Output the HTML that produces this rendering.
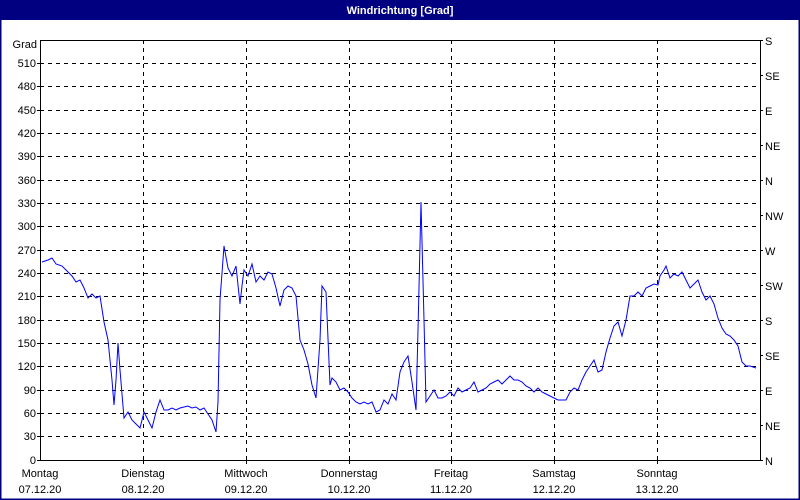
<!DOCTYPE html>
<html><head><meta charset="utf-8"><style>
html,body{margin:0;padding:0;background:#fff;}
svg{display:block;}
</style></head><body>
<svg width="800" height="500" xmlns="http://www.w3.org/2000/svg" font-family="Liberation Sans, sans-serif" font-size="11">
<rect x="0" y="0" width="800" height="500" fill="#fff"/>
<rect x="0.5" y="0.5" width="799" height="499" fill="none" stroke="#000080" stroke-width="2"/>
<rect x="0" y="0" width="800" height="20" fill="#000080"/>
<text x="400" y="14" fill="#fff" font-weight="bold" text-anchor="middle">Windrichtung [Grad]</text>
<g stroke="#000" stroke-width="1" stroke-dasharray="4,4" fill="none">
<path d="M40 63.5H760M40 86.5H760M40 110.5H760M40 133.5H760M40 156.5H760M40 180.5H760M40 203.5H760M40 226.5H760M40 250.5H760M40 273.5H760M40 296.5H760M40 320.5H760M40 343.5H760M40 366.5H760M40 390.5H760M40 413.5H760M40 436.5H760"/>
<path d="M143.5 40V460M246.5 40V460M349.5 40V460M451.5 40V460M554.5 40V460M657.5 40V460"/>
</g>
<g stroke="#000" stroke-width="1" fill="none">
<path d="M40.5 40V460.5H760.5V40M40 40.5H760"/>
<path d="M37 460.5H40M37 436.5H40M37 413.5H40M37 390.5H40M37 366.5H40M37 343.5H40M37 320.5H40M37 296.5H40M37 273.5H40M37 250.5H40M37 226.5H40M37 203.5H40M37 180.5H40M37 156.5H40M37 133.5H40M37 110.5H40M37 86.5H40M37 63.5H40"/>
<path d="M760 40.5h3M760 75.5h3M760 110.5h3M760 145.5h3M760 180.5h3M760 215.5h3M760 250.5h3M760 285.5h3M760 320.5h3M760 355.5h3M760 390.5h3M760 425.5h3M760 460.5h3"/>
<path d="M143.5 460v4M246.5 460v4M349.5 460v4M451.5 460v4M554.5 460v4M657.5 460v4"/>
</g>
<g text-anchor="end" fill="#000">
<text x="37" y="48">Grad</text>
<text x="36" y="67">510</text><text x="36" y="90">480</text><text x="36" y="114">450</text><text x="36" y="137">420</text><text x="36" y="160">390</text><text x="36" y="184">360</text><text x="36" y="207">330</text><text x="36" y="230">300</text><text x="36" y="254">270</text><text x="36" y="277">240</text><text x="36" y="300">210</text><text x="36" y="324">180</text><text x="36" y="347">150</text><text x="36" y="370">120</text><text x="36" y="394">90</text><text x="36" y="417">60</text><text x="36" y="440">30</text><text x="36" y="464">0</text>
</g>
<g fill="#000">
<text x="765" y="45">S</text><text x="765" y="80">SE</text><text x="765" y="115">E</text><text x="765" y="150">NE</text><text x="765" y="185">N</text><text x="765" y="220">NW</text><text x="765" y="255">W</text><text x="765" y="290">SW</text><text x="765" y="325">S</text><text x="765" y="360">SE</text><text x="765" y="395">E</text><text x="765" y="430">NE</text><text x="765" y="465">N</text>
</g>
<g fill="#000" text-anchor="middle">
<text x="40" y="477">Montag</text><text x="40" y="493">07.12.20</text>
<text x="143" y="477">Dienstag</text><text x="143" y="493">08.12.20</text>
<text x="246" y="477">Mittwoch</text><text x="246" y="493">09.12.20</text>
<text x="349" y="477">Donnerstag</text><text x="349" y="493">10.12.20</text>
<text x="451" y="477">Freitag</text><text x="451" y="493">11.12.20</text>
<text x="554" y="477">Samstag</text><text x="554" y="493">12.12.20</text>
<text x="657" y="477">Sonntag</text><text x="657" y="493">13.12.20</text>
</g>
<polyline fill="none" stroke="#0000ff" stroke-width="1" points="42,262 48,260 52,258 56,264 62,266 68,272 72,276 76,282 80,280 84,288 88,298 92,294 96,298 100,296 104,322 108,340 112,380 114,405 116,380 118,343 120,370 124,418 128,412 132,420 136,424 140,428 144,412 148,420 152,428 156,412 160,400 164,410 168,410 172,408 176,410 180,408 184,407 188,406 192,408 196,407 200,410 204,408 208,414 212,420 216,432 218,402 220,300 224,246 228,268 232,276 236,266 240,304 242,286 244,270 248,276 252,264 256,282 260,276 264,280 268,272 272,274 276,288 280,306 284,290 288,286 292,288 296,296 300,340 304,350 308,364 312,385 316,398 320,340 322,286 326,292 330,385 332,378 336,382 340,390 344,388 348,392 352,398 356,402 360,404 364,402 368,404 372,402 376,412 380,410 384,400 388,404 392,394 396,400 400,372 404,362 408,356 412,382 416,410 418,330 421,202 424,320 426,402 430,396 434,390 438,398 442,398 446,396 450,392 454,396 458,388 462,392 466,390 470,388 474,382 478,392 482,390 486,388 490,384 494,382 498,380 502,384 506,380 510,376 514,380 518,380 522,382 526,386 530,388 534,392 538,388 542,392 546,394 550,396 554,398 558,400 562,400 566,400 570,392 574,388 578,390 582,380 586,372 590,366 594,360 598,372 602,370 606,352 610,338 614,326 618,322 622,336 626,320 630,296 634,296 638,292 642,296 646,288 650,286 654,284 658,285 660,276 664,270 666,266 670,278 674,274 678,276 682,272 686,280 690,288 694,284 698,280 702,292 706,300 710,296 714,304 718,318 722,328 726,334 730,336 734,340 738,346 742,362 746,366 750,366 756,368"/>
</svg>
</body></html>
